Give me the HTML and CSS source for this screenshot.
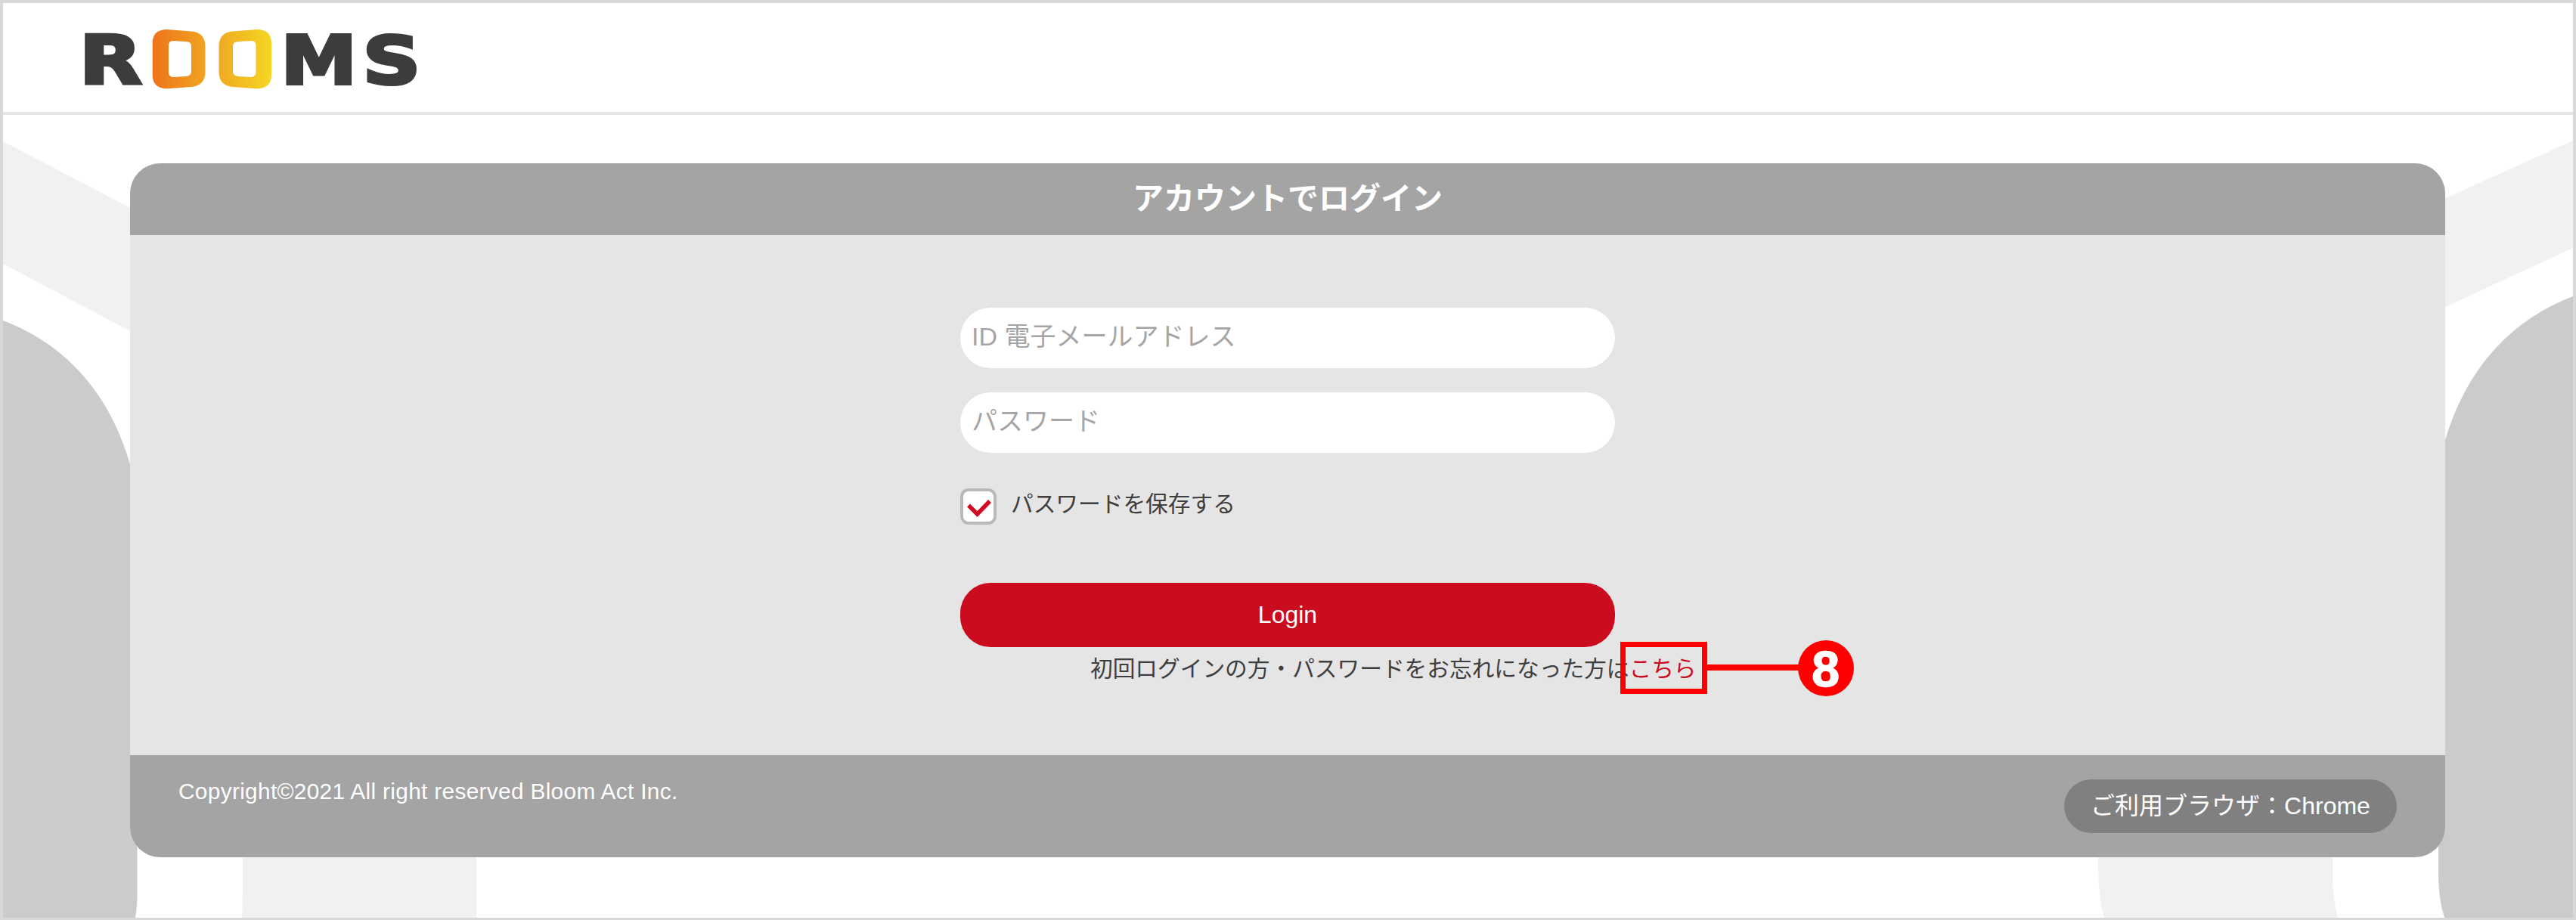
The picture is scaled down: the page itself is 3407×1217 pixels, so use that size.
FILE: index.html
```html
<!DOCTYPE html>
<html lang="ja">
<head>
<meta charset="utf-8">
<title>ROOMS</title>
<link rel="stylesheet" href="styles.css">
</head>
<body>
<div class="page">
  <svg class="backdrop" viewBox="4 4 3399 1210" preserveAspectRatio="none" aria-hidden="true">
    <g fill="#f1f1f1">
      <path d="M4 187L180 279V442L4 349Z"/>
      <path d="M3403 186L3226 266V410L3403 328Z"/>
      <path d="M321 1100H630V1214H320Q321 1190 321 1160Z"/>
      <path d="M2775 1100H3085V1163Q3086 1192 3092 1214H2783Q2775 1185 2775 1140Z"/>
    </g>
    <g fill="#cbcbcb">
      <path d="M4 424C80 453 142 512 172 614Q181.500 650 181.500 690V1180Q181.500 1200 179 1214H4Z"/>
      <path d="M3403 392C3326 421 3264 482 3234 582Q3225 620 3225 660V1155Q3225 1190 3233 1214H3403Z"/>
    </g>
  </svg>
  <header class="header">
    <svg class="logo" viewBox="80 4 520 144" role="img" aria-label="ROOMS">
      <defs>
        <linearGradient id="orange"><stop offset="0" stop-color="#ee741b"/><stop offset="1" stop-color="#f1a320"/></linearGradient>
        <linearGradient id="yellow"><stop offset="0" stop-color="#f0aa22"/><stop offset="1" stop-color="#f5d623"/></linearGradient>
      </defs>
      <g class="logo-text">
        <text transform="translate(104.700 110.500) scale(1.210 1)">R</text>
        <text transform="translate(371.500 110.500) scale(1.135 1)">M</text>
        <text transform="translate(479.600 110.500) scale(1.200 .990)">S</text>
      </g>
      <path fill="url(#orange)" fill-rule="evenodd" d="M221 39L253 41.500Q271.500 43 271.500 62V95Q271.500 113 253 115L221 117.300Q201.700 117 201.700 99V57Q201.700 39 221 39ZM229 54Q223 54 223 60V95Q223 102 229 102L246 101Q253 100 253 95V61Q253 55 246 55Z"/>
      <path fill="url(#yellow)" fill-rule="evenodd" d="M339.500 39L307.500 41.500Q289.500 43 289.500 62V95Q289.500 113 307.500 115L339.500 117.300Q359 117 359 99V57Q359 39 339.500 39ZM332 54Q338.500 54 338.500 60V95Q338.500 102 332 102L315 101Q308 100 308 95V61Q308 55 315 55Z"/>
    </svg>
  </header>
  <main class="panel">
    <h1 class="panel-title">アカウントでログイン</h1>
    <form class="panel-body">
      <input class="field" type="text" placeholder="ID 電子メールアドレス">
      <input class="field" type="password" placeholder="パスワード">
      <label class="remember">
        <span class="checkbox"><svg viewBox="0 0 40 40"><path d="M7 18.500L18.500 30L35 13" fill="none" stroke="#d00c20" stroke-width="5.500"/></svg></span>
        <span>パスワードを保存する</span>
      </label>
      <button class="login" type="button">Login</button>
      <p class="note">初回ログインの方・パスワードをお忘れになった方は<a class="link" href="#">こちら<span class="callout"><span class="callout-box"></span><span class="callout-line"></span><span class="callout-number">8</span></span></a></p>
    </form>
    <footer class="panel-footer">
      <small class="copyright">Copyright©2021 All right reserved Bloom Act Inc.</small>
      <span class="browser">ご利用ブラウザ：Chrome</span>
    </footer>
  </main>
</div>
</body>
</html>
```
FILE: styles.css
```css
* { box-sizing: border-box; }
body {
  margin: 0;
  font-family: "Liberation Sans", "Noto Sans CJK JP", sans-serif;
  color: #3e3e3e;
}
.page {
  position: relative;
  height: 1217px;
  border: 4px solid #d8d8d8;
  border-bottom-width: 3px;
  background: #fff;
  overflow: hidden;
}
.backdrop { position: absolute; inset: 0; width: 100%; height: 100%; }
.header {
  position: relative;
  height: 148px;
  padding-left: 76px;
  border-bottom: 4px solid #e5e5e5;
  background: #fff;
}
.logo { display: block; width: 520px; height: 144px; }
.logo-text {
  font: bold 89px "DejaVu Sans", sans-serif;
  fill: #3c3c3c;
  stroke: #3c3c3c;
  stroke-width: 4px;
}
.panel {
  position: relative;
  display: flex;
  flex-direction: column;
  width: 3062px;
  height: 918px;
  margin: 64px auto 0 168px;
  border-radius: 40px;
  background: #e5e5e5;
  overflow: hidden;
}
.panel-title {
  height: 95px;
  margin: 0;
  background: #a4a4a4;
  color: #fff;
  font-size: 41px;
  line-height: 94px;
  text-align: center;
}
.panel-body {
  flex: 1;
  display: flex;
  flex-direction: column;
  width: 866px;
  margin: 0 auto;
  padding-top: 96px;
}
.field {
  flex: none;
  height: 80px;
  margin: 0 0 32px;
  padding: 0 15px 4px;
  border: 0;
  border-radius: 40px;
  background: #fff;
  font: 34px "Liberation Sans", "Noto Sans CJK JP", sans-serif;
}
.field::placeholder { color: #a5a5a5; opacity: 1; }
.remember {
  display: flex;
  gap: 19px;
  height: 48px;
  margin-top: 15px;
  font-size: 29.7px;
  line-height: 42px;
}
.checkbox {
  width: 48px;
  height: 48px;
  border: 4px solid #b9b9b9;
  border-radius: 11px;
  background: #fff;
}
.checkbox svg { display: block; width: 40px; height: 40px; }
.login {
  flex: none;
  height: 85px;
  margin-top: 77px;
  padding: 0;
  border: 0;
  border-radius: 40px;
  background: #cb0c1f;
  color: #fff;
  font: 32px "Liberation Sans", sans-serif;
}
.note {
  margin: 7px 0 0 172px;
  font-size: 29.7px;
  line-height: 44px;
  white-space: nowrap;
}
.link { position: relative; color: #cb0c1f; text-decoration: none; }
.callout {
  position: absolute;
  left: -12px;
  top: 50%;
  display: flex;
  align-items: center;
  height: 74px;
  margin-top: -38px;
}
.callout-box { width: 115px; height: 69px; border: 7.5px solid #f00; }
.callout-line { width: 122px; height: 8px; margin-top: -2px; background: #f00; }
.callout-number {
  width: 74px;
  height: 74px;
  margin-left: -2px;
  border-radius: 50%;
  background: #f00;
  color: #fff;
  font: bold 66px/76px "Liberation Sans", sans-serif;
  text-align: center;
  -webkit-text-stroke: 1.5px #fff;
}
.panel-footer {
  display: flex;
  justify-content: space-between;
  height: 135px;
  padding: 32px 64px 0;
  background: #a4a4a4;
  color: #fff;
}
.copyright { font-size: 29.8px; line-height: 32px; letter-spacing: .33px; }
.browser {
  width: 440px;
  height: 71px;
  border-radius: 36px;
  background: #808080;
  font-size: 32px;
  line-height: 70px;
  text-align: center;
}
```
